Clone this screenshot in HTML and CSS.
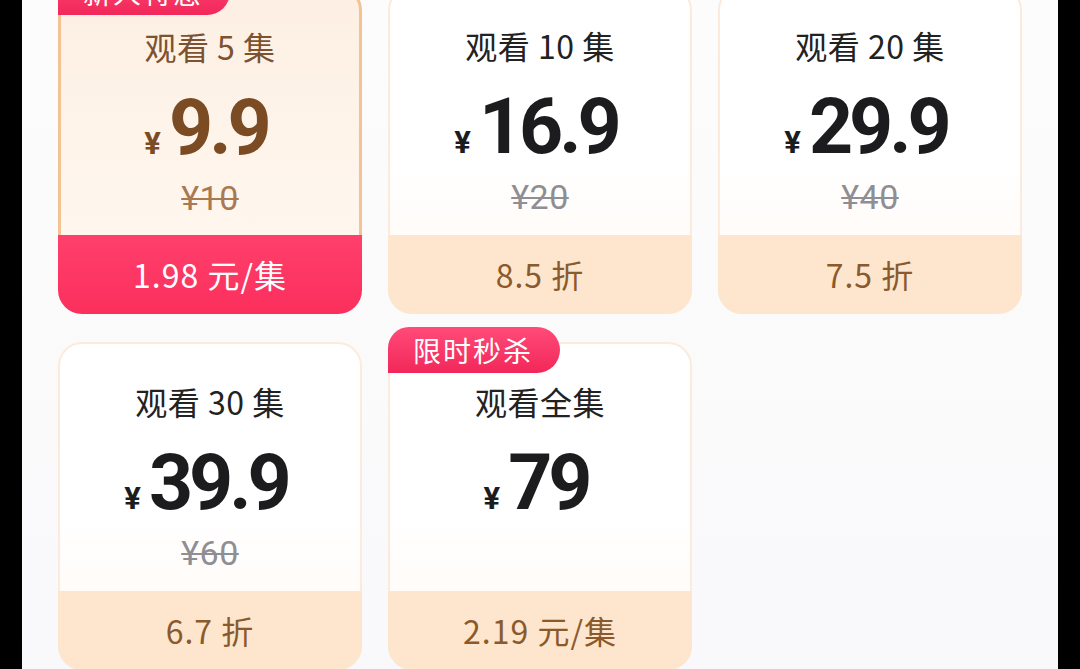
FILE: index.html
```html
<!DOCTYPE html>
<html lang="zh-CN">
<head>
<meta charset="utf-8">
<link rel="stylesheet" href="styles.css">
</head>
<body>
<main class="screen">
  <div class="grid">
    <div class="card card-active">
      <span class="badge">新人特惠</span>
      <div class="upper">
        <div class="title">观看 5 集</div>
        <div class="price"><span class="yen">¥</span><span class="num">9.9</span></div>
        <div class="orig">¥10</div>
      </div>
      <div class="band">1.98 元/集</div>
    </div>
    <div class="card">
      <div class="upper">
        <div class="title">观看 10 集</div>
        <div class="price"><span class="yen">¥</span><span class="num">16.9</span></div>
        <div class="orig">¥20</div>
      </div>
      <div class="band">8.5 折</div>
    </div>
    <div class="card">
      <div class="upper">
        <div class="title">观看 20 集</div>
        <div class="price"><span class="yen">¥</span><span class="num">29.9</span></div>
        <div class="orig">¥40</div>
      </div>
      <div class="band">7.5 折</div>
    </div>
    <div class="card">
      <div class="upper">
        <div class="title">观看 30 集</div>
        <div class="price"><span class="yen">¥</span><span class="num">39.9</span></div>
        <div class="orig">¥60</div>
      </div>
      <div class="band">6.7 折</div>
    </div>
    <div class="card">
      <span class="badge">限时秒杀</span>
      <div class="upper">
        <div class="title">观看全集</div>
        <div class="price"><span class="yen">¥</span><span class="num">79</span></div>
        <div class="orig orig-empty"></div>
      </div>
      <div class="band">2.19 元/集</div>
    </div>
  </div>
</main>
</body>
</html>
```
FILE: styles.css
```css
* { box-sizing: border-box; }
html, body {
  margin: 0;
  padding: 0;
  background: #000;
  height: 669px;
  overflow: hidden;
}
body {
  font-family: "Noto Sans CJK SC", "Noto Sans", sans-serif;
}
.screen {
  margin: 0 22px;
  height: 669px;
  background: linear-gradient(180deg, #fcfcfc 0%, #f9f9fb 100%);
  overflow: hidden;
}
.grid {
  display: grid;
  grid-template-columns: repeat(3, 304px);
  column-gap: 26px;
  row-gap: 28px;
  padding-left: 36px;
  margin-top: -14px;
}
.card {
  position: relative;
  height: 328px;
  display: flex;
  flex-direction: column;
  border-radius: 24px;
  border: 2px solid #fcebdc;
  background: linear-gradient(180deg, #ffffff 0%, #ffffff 55%, #fff8f2 100%);
}
.upper {
  flex: 1;
  display: flex;
  flex-direction: column;
  align-items: center;
  padding-top: 37px;
}
.title {
  font-size: 32px;
  line-height: 40px;
  color: #222;
  letter-spacing: 0.5px;
}
.price {
  margin-top: 21px;
  display: flex;
  align-items: baseline;
  color: #1c1c1e;
  height: 82px;
  line-height: 82px;
  padding-right: 8px;
}
.yen {
  font-family: "Roboto", sans-serif;
  font-weight: 700;
  font-size: 31px;
  margin-right: 8px;
}
.num {
  font-family: "Roboto", sans-serif;
  font-weight: 700;
  font-size: 77px;
  letter-spacing: -4px;
}
.orig {
  margin-top: 11px;
  font-family: "Roboto", sans-serif;
  font-size: 34px;
  line-height: 36px;
  color: #8e8e93;
  letter-spacing: 0.5px;
  text-decoration: line-through;
  text-decoration-thickness: 2px;
}
.band {
  height: 79px;
  margin: 0 -2px -2px;
  border-radius: 0 0 24px 24px;
  background: #fde6cd;
  color: #8b5a2c;
  font-size: 32px;
  line-height: 79px;
  text-align: center;
  letter-spacing: 1px;
}
.badge {
  position: absolute;
  top: -17px;
  left: -2px;
  height: 46px;
  padding: 0 27px 0 25px;
  border-radius: 22px 24px 24px 0;
  background: linear-gradient(180deg, #ff4b78 0%, #f2275a 100%);
  color: #fff;
  font-size: 28px;
  line-height: 46px;
  letter-spacing: 2px;
  z-index: 2;
}
.card-active {
  border: none;
  background: none;
}
.card-active .upper {
  border: 3px solid #f4c393;
  border-bottom: none;
  border-radius: 24px 24px 0 0;
  background: linear-gradient(180deg, #fdefe2 0%, #fef4ea 60%, #fff6ee 100%);
}
.card-active .title { color: #7d5230; }
.card-active .price { color: #7b4c24; }
.card-active .orig { color: #a87a52; }
.card-active .band {
  margin: 0;
  background: linear-gradient(180deg, #ff3f6c 0%, #fb2f5c 100%);
  color: #fff;
}
.card-active .badge { left: 0; }
```
